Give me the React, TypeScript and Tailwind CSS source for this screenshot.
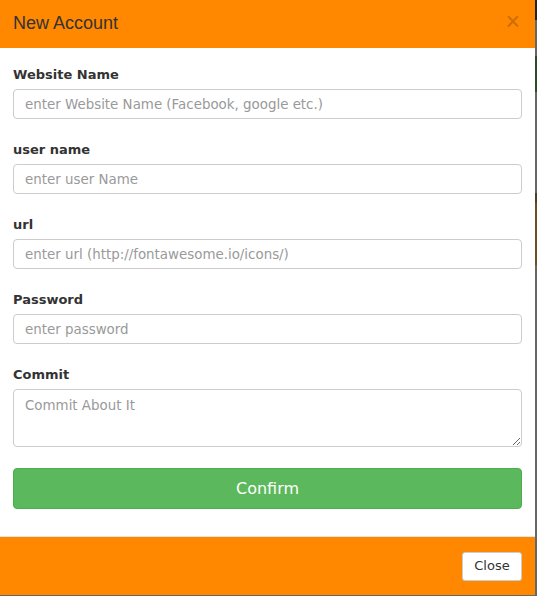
const fields = [
  { label: "Website Name", placeholder: "enter Website Name (Facebook, google etc.)" },
  { label: "user name", placeholder: "enter user Name" },
  { label: "url", placeholder: "enter url (http://fontawesome.io/icons/)" },
  { label: "Password", placeholder: "enter password" },
];

const App = () => {
  return (
    <div className="flex h-[596px] w-[537px] bg-[#666] font-['DejaVu_Sans',sans-serif]">
      <div className="flex h-[595px] w-[535px] flex-col bg-white">
        <div className="flex h-[48px] items-center justify-between bg-[#ff8800] pl-[13px] pr-[15px]">
          <h4 className="-mt-[2px] font-['Liberation_Sans',Arial,sans-serif] text-[18px] text-[#333] leading-none">
            New Account
          </h4>
          <button className="-mt-[6px] font-['Liberation_Sans',Arial,sans-serif] text-[25px] leading-none text-[#cc6d00]">
            ×
          </button>
        </div>

        <div className="flex flex-1 flex-col px-[13px] pt-[17px]">
          {fields.map((f) => (
            <div key={f.label} className="mb-[21px]">
              <label className="mb-[4px] block text-[13px] font-bold leading-[20px] text-[#333]">
                {f.label}
              </label>
              <input
                type="text"
                placeholder={f.placeholder}
                className="block h-[30px] w-full rounded-[4px] border border-[#ccc] px-[11px] text-[13.4px] text-[#555] placeholder:text-[#999] outline-none"
              />
            </div>
          ))}
          <div className="mb-[21px]">
            <label className="mb-[4px] block text-[13px] font-bold leading-[20px] text-[#333]">
              Commit
            </label>
            <textarea
              placeholder="Commit About It"
              className="block h-[58px] w-full resize-y rounded-[4px] border border-[#ccc] px-[11px] pt-[6px] text-[13.4px] text-[#555] placeholder:text-[#999] outline-none"
            />
          </div>
          <button className="h-[41px] w-full rounded-[4px] border border-[#4cae4c] bg-[#5cb85c] text-[16px] text-white">
            Confirm
          </button>
        </div>

        <div className="flex h-[59px] items-center justify-end border-t border-[#e5e5e5] bg-[#ff8800] pr-[13px]">
          <button className="h-[29px] w-[60px] rounded-[3px] border border-[#ccc] bg-white text-[13px] text-[#333]">
            Close
          </button>
        </div>
      </div>

      <div className="flex w-[2px] flex-col">
        <div className="h-[20px] bg-[#222]" />
        <div className="h-[36px] bg-[#666]" />
        <div className="h-[36px] bg-[#2d4a2a]" />
        <div className="h-[101px] bg-[#666]" />
        <div className="h-[10px] bg-[#4a4030]" />
        <div className="h-[62px] bg-[#6b5024]" />
        <div className="flex-1 bg-[#666]" />
      </div>
    </div>
  );
};

export default App;
